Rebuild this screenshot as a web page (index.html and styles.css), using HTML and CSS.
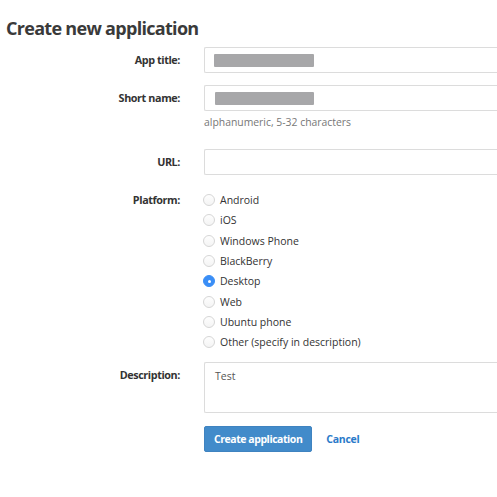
FILE: index.html
```html
<!DOCTYPE html>
<html>
<head>
<meta charset="utf-8">
<link rel="stylesheet" href="styles.css">
</head>
<body>
<div class="page">
  <h1 class="title">Create new application</h1>
  <div class="form">
    <div class="row">
      <div class="label">App title:</div>
      <div class="field"><div class="input"><span class="redact r1"></span></div></div>
    </div>
    <div class="row row-short">
      <div class="label">Short name:</div>
      <div class="field">
        <div class="input"><span class="redact r2"></span></div>
        <div class="hint">alphanumeric, 5-32 characters</div>
      </div>
    </div>
    <div class="row row-url">
      <div class="label">URL:</div>
      <div class="field"><div class="input"></div></div>
    </div>
    <div class="row row-platform">
      <div class="label label-radio">Platform:</div>
      <div class="field">
        <ul class="radios">
          <li class="radio"><span class="dot"></span>Android</li>
          <li class="radio"><span class="dot"></span>iOS</li>
          <li class="radio"><span class="dot"></span>Windows Phone</li>
          <li class="radio"><span class="dot"></span>BlackBerry</li>
          <li class="radio"><span class="dot checked"></span>Desktop</li>
          <li class="radio"><span class="dot"></span>Web</li>
          <li class="radio"><span class="dot"></span>Ubuntu phone</li>
          <li class="radio"><span class="dot"></span>Other (specify in description)</li>
        </ul>
      </div>
    </div>
    <div class="row row-desc">
      <div class="label">Description:</div>
      <div class="field"><div class="textarea">Test</div></div>
    </div>
    <div class="row row-actions">
      <div class="label"></div>
      <div class="field actions">
        <span class="btn">Create application</span>
        <span class="cancel">Cancel</span>
      </div>
    </div>
  </div>
</div>
</body>
</html>
```

FILE: styles.css
```css
html, body {
  margin: 0;
  padding: 0;
  background: #fff;
  overflow: hidden;
}
body {
  font-family: "Open Sans", "DejaVu Sans", sans-serif;
  color: #333;
  font-size: 10.5px;
  width: 497px;
  height: 497px;
}
.page {
  padding: 15px 0 0 6px;
}
.title {
  margin: 0;
  font-size: 18px;
  line-height: 26px;
  font-weight: 700;
  letter-spacing: -0.7px;
  color: #3a3a3a;
}
.form {
  margin-top: 6px;
}
.row {
  display: flex;
  align-items: flex-start;
}
.label {
  width: 174px;
  flex: none;
  text-align: right;
  padding-right: 24px;
  font-weight: 700;
  line-height: 26px;
  font-size: 10.8px;
  letter-spacing: -0.4px;
  color: #333;
}
.field {
  flex: none;
  width: 293px;
}
.input {
  height: 24px;
  border: 1px solid #dcdcdc;
  border-right: none;
  border-radius: 2px 0 0 2px;
  background: #fff;
  display: flex;
  align-items: center;
  padding-left: 9px;
}
.redact {
  display: block;
  background: #a7a7a9;
  height: 13px;
  width: 100px;
  border-radius: 1px;
}
.r2 { margin-left: 1px; width: 99px; }
.row-short { margin-top: 12px; }
.hint {
  margin-top: 4px;
  font-size: 10.4px;
  line-height: 14px;
  color: #777;
}
.row-url { margin-top: 20px; }
.row-platform { margin-top: 15px; }
.label-radio { line-height: 20px; }
.radios {
  list-style: none;
  margin: 0;
  padding: 0;
}
.radio {
  display: flex;
  align-items: center;
  height: 20.3px;
  font-size: 10.5px;
  color: #333;
}
.dot {
  width: 10px;
  height: 10px;
  border: 1px solid #d6d6d6;
  border-radius: 50%;
  background: linear-gradient(#fefefe, #f4f4f4);
  margin: 0 5px 0 -1px;
  flex: none;
  box-sizing: content-box;
  position: relative;
}
.dot.checked {
  border-color: #3a8ef6;
  background: #3a8ef6;
}
.dot.checked::after {
  content: "";
  position: absolute;
  left: 3.5px;
  top: 3.5px;
  width: 3px;
  height: 3px;
  border-radius: 50%;
  background: #fff;
}
.row-desc { margin-top: 10px; }
.textarea {
  height: 43px;
  border: 1px solid #dcdcdc;
  border-right: none;
  border-radius: 2px 0 0 2px;
  padding: 6px 10px 0;
  font-size: 10.5px;
  line-height: 14px;
  color: #555;
}
.row-actions { margin-top: 13px; }
.actions {
  display: flex;
  align-items: center;
}
.btn {
  display: inline-block;
  background: #428bca;
  border: 1px solid #3f83c0;
  color: #fff;
  font-weight: 700;
  font-size: 10.5px;
  letter-spacing: -0.45px;
  line-height: 24px;
  padding: 0 9px;
  border-radius: 2px;
}
.cancel {
  margin-left: 14px;
  color: #2a7ac9;
  font-weight: 700;
  font-size: 10.5px;
  letter-spacing: -0.3px;
}
```
